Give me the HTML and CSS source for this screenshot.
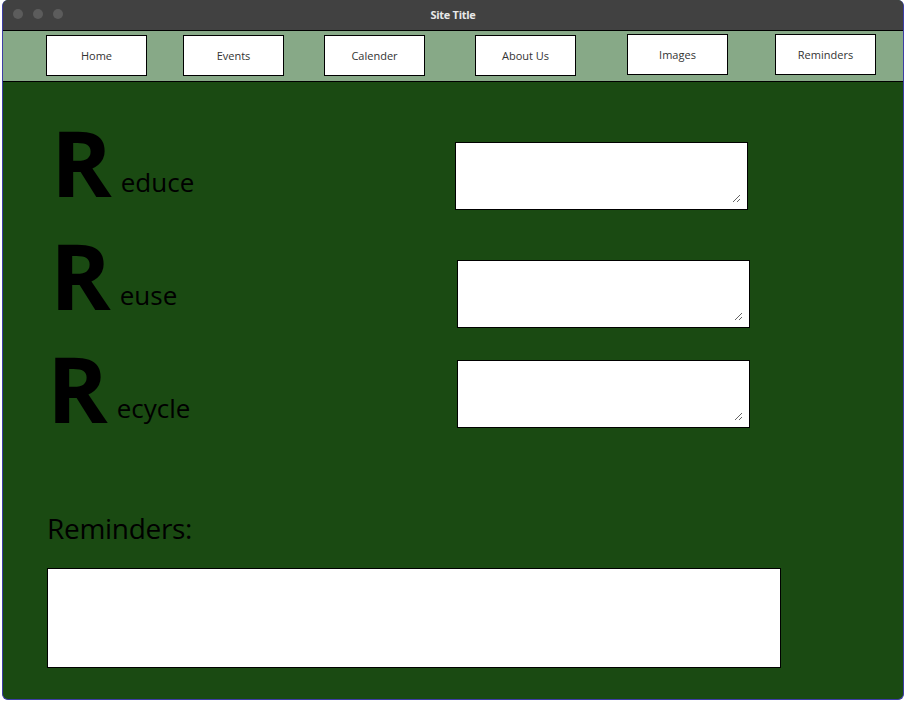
FILE: index.html
```html
<!DOCTYPE html>
<html>
<head>
<meta charset="utf-8">
<title>Site Title</title>
<link rel="stylesheet" href="styles.css">
</head>
<body>
<div class="window">
  <div class="titlebar">
    <div class="dots"><span class="dot"></span><span class="dot"></span><span class="dot"></span></div>
    <div class="title">Site Title</div>
  </div>
  <nav class="nav">
    <div class="btn b1">Home</div>
    <div class="btn b2">Events</div>
    <div class="btn b3">Calender</div>
    <div class="btn b4">About Us</div>
    <div class="btn b5">Images</div>
    <div class="btn b6">Reminders</div>
  </nav>
  <main class="main">
    <div class="row r1">
      <div class="label"><span class="cap">R</span><span class="rest">educe</span></div>
      <textarea class="box"></textarea>
    </div>
    <div class="row r2">
      <div class="label"><span class="cap">R</span><span class="rest">euse</span></div>
      <textarea class="box"></textarea>
    </div>
    <div class="row r3">
      <div class="label"><span class="cap">R</span><span class="rest">ecycle</span></div>
      <textarea class="box"></textarea>
    </div>
    <h2 class="rem-title">Reminders:</h2>
    <div class="rem-box"></div>
  </main>
</div>
</body>
</html>
```
FILE: styles.css
```css
html, body {
  margin: 0;
  padding: 0;
  background: #ffffff;
}
body {
  font-family: "Open Sans", "Noto Sans", sans-serif;
}
.window {
  margin-left: 2px;
  width: 900px;
  height: 699px;
  border: 1px solid #3d3da6;
  border-top: none;
  border-radius: 6px;
  overflow: hidden;
  display: flex;
  flex-direction: column;
  background: #1a4a12;
}
.titlebar {
  height: 30px;
  background: #414141;
  position: relative;
  display: flex;
  align-items: center;
  justify-content: center;
  flex: none;
}
.dots {
  position: absolute;
  left: 10px;
  top: 9px;
  display: flex;
  gap: 10px;
}
.dot {
  width: 10px;
  height: 10px;
  border-radius: 50%;
  background: #5c5c5c;
}
.title {
  color: #e8e8e8;
  font-weight: bold;
  font-size: 11px;
  letter-spacing: -0.3px;
  margin-top: -1px;
}
.nav {
  flex: none;
  height: 50px;
  background: #87a987;
  border-top: 1px solid #000;
  border-bottom: 1px solid #000;
  display: flex;
  align-items: flex-start;
}
.btn {
  box-sizing: border-box;
  width: 101px;
  height: 41px;
  background: #fff;
  border: 1px solid #000;
  display: flex;
  align-items: center;
  justify-content: center;
  font-size: 11px;
  color: #333;
  margin-top: 4px;
}
.b1 { margin-left: 43px; }
.b2 { margin-left: 36px; }
.b3 { margin-left: 40px; }
.b4 { margin-left: 50px; }
.b5 { margin-left: 51px; margin-top: 3px; }
.b6 { margin-left: 47px; margin-top: 3px; }
.main {
  flex: 1;
  padding-top: 34px;
}
.row {
  display: flex;
  align-items: flex-start;
  height: 92px;
}
.label {
  box-sizing: border-box;
  width: 453px;
  line-height: 92px;
  height: 92px;
  white-space: nowrap;
}
.cap {
  font-size: 92px;
  font-weight: bold;
  color: #000;
  letter-spacing: -2px;
}
.rest {
  font-size: 26px;
  color: #000;
  margin-left: 11px;
  vertical-align: 5px;
}
.box {
  box-sizing: border-box;
  width: 291px;
  height: 66px;
  border: 6px solid #fff;
  box-shadow: 0 0 0 1px #000;
  background: #fff;
  margin: 0;
  padding: 0;
  border-radius: 0;
  outline: none;
}
.r1 .label { padding-left: 48px; width: 453px; }
.r1 .box { margin-top: 27px; }
.r2 { margin-top: 21px; }
.r2 .label { padding-left: 47px; width: 455px; }
.r2 .box { margin-top: 32px; }
.r3 { margin-top: 21px; }
.r3 .label { padding-left: 44px; width: 455px; }
.r3 .box { margin-top: 19px; }
.rem-title {
  margin: 75px 0 0 44px;
  font-size: 28px;
  font-weight: normal;
  color: #000;
  line-height: 38px;
  letter-spacing: -0.3px;
}
.rem-box {
  box-sizing: border-box;
  margin: 21px 0 0 44px;
  width: 734px;
  height: 100px;
  background: #fff;
  border: 1px solid #000;
}
```
